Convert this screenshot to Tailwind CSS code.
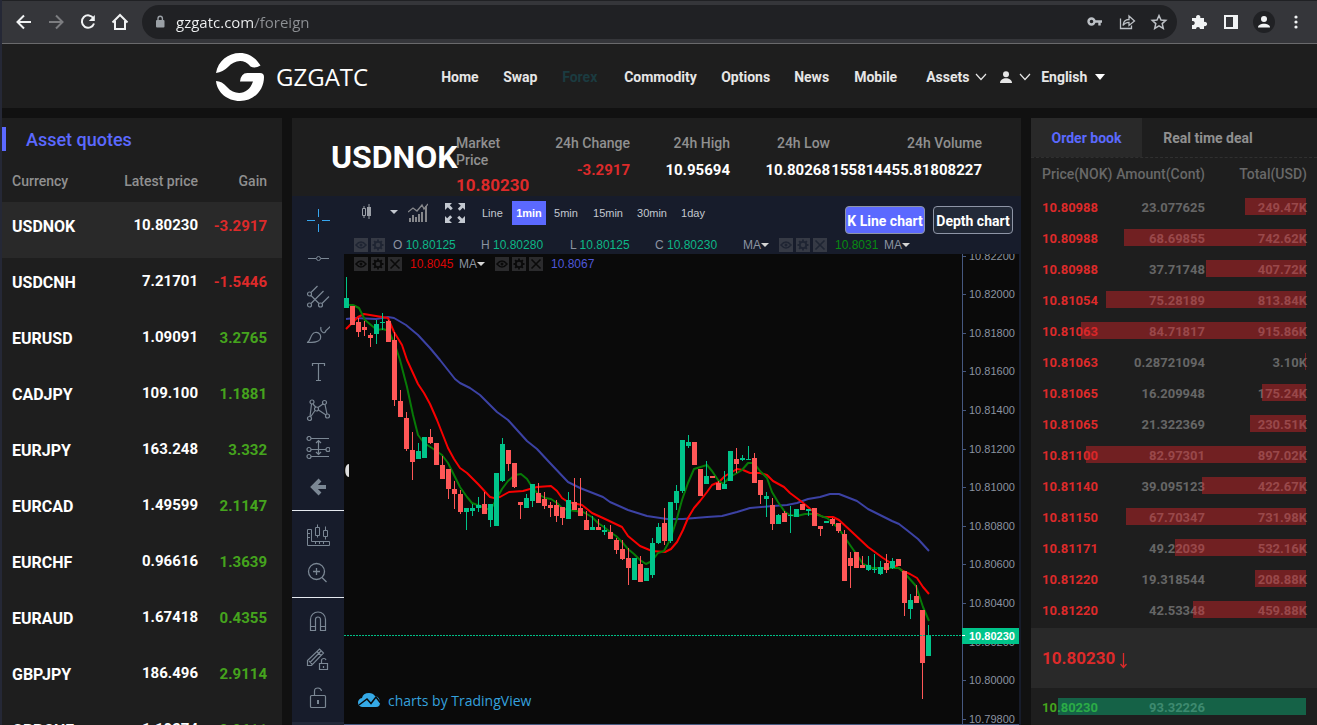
<!DOCTYPE html>
<html lang="en">
<head>
<meta charset="utf-8">
<title>GZGATC</title>
<script src="https://cdn.jsdelivr.net/npm/@tailwindcss/browser@4"></script>
</head>
<body class="bg-[#111] font-['Roboto',sans-serif] text-white">
<svg class="hidden">
  <symbol id="eye" viewBox="0 0 14 14"><path d="M2 7Q7 1 12 7Q7 13 2 7Z" fill="none" stroke="currentColor" stroke-width="1.5"/><circle cx="7" cy="7" r="1.5" fill="currentColor"/></symbol>
  <symbol id="gear" viewBox="0 0 14 14"><g fill="none" stroke="currentColor"><circle cx="7" cy="7" r="3.2" stroke-width="1.8"/><path d="M7 1.5v2M7 10.5v2M1.5 7h2M10.5 7h2M3.1 3.1l1.4 1.4M9.5 9.5l1.4 1.4M3.1 10.9l1.4-1.4M9.5 4.5l1.4-1.4" stroke-width="1.8"/></g></symbol>
  <symbol id="cross" viewBox="0 0 14 14"><path d="M2.5 2.5l9 9M11.5 2.5l-9 9" stroke="currentColor" stroke-width="1.6"/></symbol>
  <symbol id="chev" viewBox="0 0 12 8"><path d="M1 1l5 5.5L11 1" fill="none" stroke="currentColor" stroke-width="1.2"/></symbol>
</svg>
<div class="flex h-screen flex-col overflow-hidden border-l-2 border-[#252836]">
  <!-- browser bar -->
  <div class="flex h-11 shrink-0 items-center border-t border-b border-t-[#202124] border-b-[#6a6a6c] bg-[#35363a] pl-3">
    <div class="flex items-center gap-3 text-[#f1f3f4]">
      <button aria-label="Back"><svg class="size-5" viewBox="0 0 20 20" fill="none" stroke="currentColor" stroke-width="2"><path d="M17 10H4M10 3.5L3.5 10l6.5 6.5"/></svg></button>
      <button aria-label="Forward" class="text-[#7c7d80]"><svg class="size-5" viewBox="0 0 20 20" fill="none" stroke="currentColor" stroke-width="2"><path d="M3 10h13M10 3.5L16.5 10 10 16.5"/></svg></button>
      <button aria-label="Reload"><svg class="size-5" viewBox="0 0 20 20" fill="none" stroke="currentColor" stroke-width="2"><path d="M15.5 6.5A6.2 6.2 0 1 0 16 11.5"/><path d="M16.8 3v6h-6z" fill="currentColor" stroke="none"/></svg></button>
      <button aria-label="Home page"><svg class="size-5" viewBox="0 0 20 20" fill="none" stroke="currentColor" stroke-width="2"><path d="M2.5 10.5L10 3l7.500 7.5M5 9v8h10V9"/></svg></button>
    </div>
    <div class="ml-3 flex h-[34px] flex-1 items-center rounded-full bg-[#202124] pr-2 pl-3">
      <svg class="w-3" viewBox="0 0 12 14"><rect x="2" y="5" width="8.5" height="7.5" rx="1" fill="#9aa0a6"/><path d="M4 5V3.500a2.200 2.200 0 0 1 4.400 0V5" fill="none" stroke="#9aa0a6" stroke-width="1.4"/></svg>
      <input aria-label="Address" type="text" value="gzgatc.com/foreign" class="ml-2.5 min-w-0 flex-1 bg-[linear-gradient(90deg,#f1f3f4_79px,#8e9195_79px)] bg-clip-text font-['Open_Sans',sans-serif] text-[15px] leading-5 text-transparent">
      <div class="ml-auto flex items-center gap-3 text-[#bdc1c6]">
        <button aria-label="Password"><svg class="size-5" viewBox="0 0 20 20" fill="none" stroke="currentColor"><circle cx="6.5" cy="9.5" r="3" stroke-width="2.4"/><path d="M9.5 9.5h7.500M14.5 9.5v4" stroke-width="2.4"/></svg></button>
        <button aria-label="Share"><svg class="size-5" viewBox="0 0 20 20" fill="none" stroke="currentColor" stroke-width="1.3"><path d="M3.5 6.5v10h11v-3M6 13.5q.5-6 6-6V4l5.500 5-5.500 4.500v-3.200q-4 0-6 3.200z"/></svg></button>
        <button aria-label="Bookmark"><svg class="size-5" viewBox="0 0 20 20" fill="none" stroke="currentColor" stroke-width="1.5"><path d="M10 3.5l2 4.500 4.800.4-3.600 3.200 1.100 4.800L10 13.800l-4.300 2.600 1.100-4.800-3.600-3.200L8 8z"/></svg></button>
      </div>
    </div>
    <div class="flex items-center gap-3 pr-2.5 pl-3 text-[#f1f3f4]">
      <button aria-label="Extensions"><svg class="size-5" viewBox="0 0 20 20" fill="currentColor"><path d="M3 6h4.200a2.200 2.200 0 1 1 4 0H15v4a2.200 2.200 0 1 1 0 4v3h-4a2 2 0 1 0-4 0H3v-4a2.100 2.100 0 1 0 0-4z"/></svg></button>
      <button aria-label="Side panel"><svg class="size-5" viewBox="0 0 20 20"><path fill="currentColor" fill-rule="evenodd" d="M3 3h14v14H3zM5 5v10h7V5z"/></svg></button>
      <button aria-label="Profile" class="flex size-[22px] items-center justify-center rounded-full bg-[#202124]"><svg class="size-4" viewBox="0 0 16 16" fill="currentColor"><circle cx="8" cy="5" r="3"/><path d="M2 13.500c0-5 12-5 12 0z"/></svg></button>
      <button aria-label="Menu"><svg class="size-5" viewBox="0 0 20 20" fill="currentColor"><circle cx="9" cy="5" r="1.6"/><circle cx="9" cy="10" r="1.6"/><circle cx="9" cy="15" r="1.6"/></svg></button>
    </div>
  </div>
  <!-- site header -->
  <header class="flex h-16 shrink-0 items-center bg-[#1e1e1e] pt-0.5 pl-[214px]">
    <a href="#" class="flex items-center gap-3">
      <svg class="size-12" viewBox="0 0 48 48" fill="#fff"><path d="M0 20C2 8 12 0 24 0c9 0 16 5 20.500 12.500Q39 16 34.500 13.500C28 5 18 7 12 14q-5 5-12 6z"/><path d="M0 28q6 0 11 6c9 10 22 7 26-5.500H24q1-9 8-8.500h12q4 0 4 4C48 38 37 48 24 48 11 48 1 39 0 28z"/></svg>
      <span class="font-['Open_Sans',sans-serif] text-[24px]">GZGATC</span>
    </a>
    <nav class="ml-[73px] flex items-center text-[14px] font-bold text-[#e6e6e6]">
      <a href="#" class="w-[62px]">Home</a><a href="#" class="w-[59px]">Swap</a><a href="#" class="w-[62px] text-[#1b3b40]">Forex</a><a href="#" class="w-[97px]">Commodity</a><a href="#" class="w-[73px]">Options</a><a href="#" class="w-[60px]">News</a><a href="#" class="w-[72px]">Mobile</a>
      <button class="flex w-[74px] items-center font-bold"><span class="w-[49px] text-left">Assets</span><svg class="h-2 w-3"><use href="#chev"/></svg></button>
      <button aria-label="Account" class="flex w-[41px] items-center gap-[7px]"><svg class="h-3 w-3" viewBox="0 0 12 12" fill="currentColor"><circle cx="6" cy="3.2" r="3"/><path d="M0 12c0-6.500 12-6.500 12 0z"/></svg><svg class="h-2 w-3"><use href="#chev"/></svg></button>
      <button class="flex items-center gap-2 font-bold">English<svg class="h-1.5 w-2.5" viewBox="0 0 10 6"><path d="M0 0h10L5 6z" fill="#fff"/></svg></button>
    </nav>
  </header>

  <main class="grid min-h-0 flex-1 grid-cols-[280px_minmax(0,1fr)_286px] gap-2.5 pt-2.5">
    <!-- quotes -->
    <section class="overflow-hidden bg-[#1e1e1e] pt-[9px]">
      <h2 class="h-6 border-l-4 border-[#5b69ff] pl-5 text-[18px] leading-[26px] font-medium text-[#5b69ff]">Asset quotes</h2>
      <table class="mt-[9px] w-full table-fixed">
        <thead class="text-[14px] font-medium text-[#909090]"><tr class="h-[42px]"><th class="w-[110px] pl-2.5 text-left font-medium">Currency</th><th class="w-[86px] text-right font-medium">Latest price</th><th class="pr-[15px] text-right font-medium">Gain</th></tr></thead>
        <tbody id="quotes" class="text-[16px] font-bold"></tbody>
      </table>
    </section>

    <!-- chart -->
    <section class="flex min-h-0 flex-col overflow-hidden bg-[#171c2b]">
      <div class="flex h-[78px] shrink-0 bg-[#1e1e1e] pl-[39px] font-medium">
        <h1 class="w-[125px] self-center text-[32px] font-bold">USDNOK</h1>
        <dl class="flex pt-[17px] text-[14px] leading-[17px] whitespace-nowrap text-[#909090]">
          <div class="w-[74px] whitespace-normal"><dt class="w-14">Market Price</dt><dd class="pt-2 text-[17px] font-bold text-[#dd2a2a]">10.80230</dd></div>
          <div class="flex w-[100px] flex-col items-end gap-2.5"><dt>24h Change</dt><dd class="text-[15px] font-bold text-[#dd2a2a]">-3.2917</dd></div>
          <div class="flex w-[100px] flex-col items-end gap-2.5"><dt>24h High</dt><dd class="text-[15px] font-bold text-white">10.95694</dd></div>
          <div class="flex w-[100px] flex-col items-end gap-2.5"><dt>24h Low</dt><dd class="text-[15px] font-bold text-white">10.80268</dd></div>
          <div class="flex w-[152px] flex-col items-end gap-2.5"><dt>24h Volume</dt><dd class="text-[15px] font-bold text-white">155814455.81808227</dd></div>
        </dl>
      </div>
      <div class="flex min-h-0 flex-1 font-['Liberation_Sans',sans-serif]">
        <div class="w-[52px] shrink-0 text-[#7b8794]">
          <div class="border-b border-[#e6eaf0] py-[5px]">
            <button aria-label="Crosshair" class="flex h-[38px] w-full items-center justify-center text-[#37a6ef]"><svg class="size-6" viewBox="0 0 24 24" fill="none" stroke="currentColor"><path d="M12.500 1v8M12.500 16v8M1 12.500h8M16 12.500h8"/></svg></button>
            <button aria-label="Line" class="flex h-[38px] w-full items-center justify-center"><svg class="size-6" viewBox="0 0 24 24" fill="none" stroke="currentColor"><path d="M2 12.500h8M15 12.500h8"/><circle cx="12.5" cy="12.5" r="2"/></svg></button>
            <button aria-label="Pitchfork" class="flex h-[38px] w-full items-center justify-center"><svg class="size-6" viewBox="0 0 24 24" fill="none" stroke="currentColor" stroke-width="1.2"><circle cx="3.5" cy="10" r="2"/><circle cx="3.5" cy="21" r="2"/><circle cx="14.5" cy="21" r="2"/><path d="M5 8.500L11.500 2M5 19.500L17.500 7M16 19.500l7-7M5 11.500l8 8"/></svg></button>
            <button aria-label="Brush" class="flex h-[38px] w-full items-center justify-center"><svg class="size-6" viewBox="0 0 24 24" fill="none" stroke="currentColor" stroke-width="1.2"><path d="M1 20.500c4-1 3-9 8-10 4-1 7 3 5 7-2 3-7 3-13 3zM15 5q-1 4 2 5.500 2 1 3-2L25 4"/></svg></button>
            <button aria-label="Text" class="flex h-[38px] w-full items-center justify-center"><svg class="size-6" viewBox="0 0 24 24" fill="none" stroke="currentColor" stroke-width="1.2"><path d="M6.500 6V3.500h12V6M12.500 3.500v17M10 20.500h5"/></svg></button>
            <button aria-label="Pattern" class="flex h-[38px] w-full items-center justify-center"><svg class="size-6" viewBox="0 0 24 24" fill="none" stroke="currentColor" stroke-width="1.2"><circle cx="6" cy="4" r="2"/><circle cx="18.5" cy="4.5" r="2"/><circle cx="3.5" cy="20.5" r="2"/><circle cx="21.5" cy="18" r="2"/><circle cx="10.5" cy="11" r="2"/><path d="M5.500 6L4 18.500M7 6l3 3.500M9 12.500l-4.500 6.500M12 9.500L17 6M12.500 12l7.500 5M19 6.500l2 9.500"/></svg></button>
            <button aria-label="Position" class="flex h-[38px] w-full items-center justify-center"><svg class="size-6" viewBox="0 0 24 24" fill="none" stroke="currentColor" stroke-width="1.2"><circle cx="3" cy="2.5" r="2"/><circle cx="3" cy="13.5" r="2"/><circle cx="3" cy="20.5" r="2"/><circle cx="22" cy="13.5" r="2"/><path d="M5 2.500h18M5 13.500h15M5 20.500h18M12.500 5v13M10 7l2.500-2.500L15 7M10 16l2.500 2.500L15 16"/></svg></button>
            <button aria-label="Back arrow" class="flex h-[38px] w-full items-center justify-center"><svg class="size-6" viewBox="0 0 24 24" fill="none" stroke="currentColor"><path d="M20 13H7M14 6l-7 7 7 7" stroke-width="4"/></svg></button>
          </div>
          <div class="border-b border-[#e6eaf0] py-[5px]">
            <button aria-label="Measure" class="flex h-[38px] w-full items-center justify-center"><svg class="size-6" viewBox="0 0 24 24" fill="none" stroke="currentColor"><path d="M1.500 6.500h4v12h18v4h-22zM9.500 4.500h4v8h-4zM11.500 1.500v3M11.500 12.500v2M17.500 7.500h4v6h-4zM19.500 3.500v4M19.500 13.500v3M2 10.500h2M2 14.500h2M9.500 19v2M13.500 19v2M17.500 19v2"/></svg></button>
            <button aria-label="Zoom in" class="flex h-[38px] w-full items-center justify-center"><svg class="size-6" viewBox="0 0 24 24" fill="none" stroke="currentColor" stroke-width="1.3"><circle cx="10.5" cy="10.5" r="8"/><path d="M16 16.500l4.500 4.500M7 10.500h7M10.500 7v7"/></svg></button>
          </div>
          <div class="py-[5px]">
            <button aria-label="Magnet" class="flex h-[38px] w-full items-center justify-center"><svg class="size-6" viewBox="0 0 24 24" fill="none" stroke="currentColor" stroke-width="1.2"><path d="M4.500 20.500v-11a7.500 7.500 0 0 1 15 0v11h-5v-11a2.500 2.500 0 0 0-5 0v11zM4.500 16.500h5M14.500 16.500h5"/></svg></button>
            <button aria-label="Stay drawing" class="flex h-[38px] w-full items-center justify-center"><svg class="size-6" viewBox="0 0 24 24" fill="none" stroke="currentColor" stroke-width="1.2"><path d="M1.500 17.500v-5L13.500 1l4 4-12 12.500zM3 13l3 3M4 14.500L15 3M11 3.500l4 4M13.500 15.500h8v6h-8zM15.500 15v-2.500q0-2 2.500-2 1.500 0 2 1.500M17.500 18v2"/></svg></button>
            <button aria-label="Lock" class="flex h-[38px] w-full items-center justify-center"><svg class="size-6" viewBox="0 0 24 24" fill="none" stroke="currentColor" stroke-width="1.2"><rect x="4.5" y="9.5" width="15" height="12" rx="1"/><path d="M8.500 9V5q0-3 3.500-3 3 0 3.500 3"/><path d="M12 14v4" stroke-width="2"/></svg></button>
          </div>
          <div class="h-3 bg-[#222838]"></div>
        </div>
        <div class="min-w-0 flex-1 pr-0.5">
          <div class="flex h-10 items-start pl-4 text-[11px] text-[#c3c8d0]">
            <button aria-label="Chart type" class="mt-[7px] flex items-center gap-[17px]"><svg class="h-[18px] w-[13px]" viewBox="0 0 13 18"><path d="M2.500 5.500h3v7h-3zM4 3v2.500M4 12.500V15" fill="none" stroke="#9a9ea6"/><path d="M7 4h4v9H7zM8.500 1h1v15h-1z" fill="#9a9ea6"/></svg><svg class="h-1 w-2" viewBox="0 0 8 4"><path d="M0 0h8L4 4z" fill="#c3c8d0"/></svg></button>
            <button aria-label="Indicators" class="mt-[7px] ml-2.5"><svg class="h-5 w-5" viewBox="0 0 20 20"><path d="M1 15h2v4H1zM4 12h2v7H4zM7 14h2v5H7zM10 11h2v8h-2zM13 9h2v10h-2zM17 3h2v16h-2z" fill="#85868a"/><path d="M0 9l5-4 4 3 5-6 2 4 4-5" fill="none" stroke="#85868a" stroke-width="1.3"/></svg></button>
            <button aria-label="Full screen" class="mt-[7px] ml-[17px]"><svg class="size-5" viewBox="0 0 20 20" fill="#c3c8d0"><path d="M0 0h7L4.800 2.200l3 3-2 2-3-3L0 7zM20 0v7l-2.200-2.200-3 3-2-2 3-3L13 0zM0 20v-7l2.200 2.200 3-3 2 2-3 3L7 20zM20 20h-7l2.200-2.200-3-3 2-2 3 3L20 13z"/></svg></button>
            <div class="mt-[5px] ml-2 flex h-6 items-stretch">
              <button class="w-[39px] pl-[9px] text-left">Line</button><button class="w-[34px] bg-[#5b69ff] font-bold text-white">1min</button><button class="w-[40px]">5min</button><button class="w-[44px]">15min</button><button class="w-[44px]">30min</button><button class="w-[38px]">1day</button>
            </div>
            <div class="mt-2.5 mr-1.5 ml-auto flex gap-2 font-['Roboto',sans-serif] text-[14px] font-bold whitespace-nowrap text-white">
              <button class="flex h-7 w-20 items-center justify-center rounded border border-[#8e95a6] bg-[#5b69ff] pt-0.5">K Line chart</button>
              <button class="flex h-7 w-20 items-center justify-center rounded border border-[#8e95a6] bg-[#232a38] pt-0.5">Depth chart</button>
            </div>
          </div>
          <div class="flex h-[18px] items-center pl-2.5 text-[12px] text-[#8b93a1]">
            <div class="flex gap-[3px] text-[#1f2533] *:size-[14px] *:bg-[#363a45]"><svg><use href="#eye"/></svg><svg><use href="#gear"/></svg></div>
            <span class="ml-2 w-[88px]">O <span class="text-[#0db787]">10.80125</span></span>
            <span class="w-[89px]">H <span class="text-[#0db787]">10.80280</span></span>
            <span class="w-[85px]">L <span class="text-[#0db787]">10.80125</span></span>
            <span class="w-[88px]">C <span class="text-[#0db787]">10.80230</span></span>
            <span class="flex w-9 items-center">MA<svg class="h-1 w-2" viewBox="0 0 8 4"><path d="M0 0h8L4 4z" fill="#d5d5d5"/></svg></span>
            <div class="flex gap-[3px] text-[#1f2533] *:size-[14px] *:bg-[#363a45]"><svg><use href="#eye"/></svg><svg><use href="#gear"/></svg><svg><use href="#cross"/></svg></div>
            <span class="ml-2 w-[49px] text-[#078a12]">10.8031</span>
            <span class="flex items-center">MA<svg class="h-1 w-2" viewBox="0 0 8 4"><path d="M0 0h8L4 4z" fill="#d5d5d5"/></svg></span>
          </div>
          <div class="relative bg-[#0a0a0a]">
            <svg id="chart" class="block w-full" viewBox="344 254 675 471" font-family="Liberation Sans, sans-serif" font-size="11">
              <g fill="none" stroke-width="2" stroke-linejoin="round">
                <path stroke="#3c42a4" d="M346 319L355 318 376 319 388 317 394 318 406 325 418 335 430 348 440 360 455 379 460 383 470 388 480 395 497 412 508 420 527 441 537 449 550 463 568 482 580 488 603 497 610 502 628 510 647 516 667 519 683 519 707 517 722 516 737 512 750 508 773 506 787 505 797 503 808 499 820 497 830 494 839 494 857 501 868 509 892 521 899 524 908 531 918 539 929 551"/>
                <path stroke="#f80000" d="M346 329L352 323 358 317 364 314 376 316 388 318 394 332 402 345 407 360 418 384 424 393 430 404 437 420 448 448 454 459 460 468 467 473 478 484 490 497 494 498 500 497 509 492 523 491 537 487 551 486 557 491 562 498 568 502 582 505 592 513 603 518 622 527 628 536 634 541 640 546 652 551 665 552 671 549 677 542 683 530 688 518 694 508 700 501 707 492 712 485 719 482 725 476 732 472 737 469 743 470 750 473 760 473 767 475 773 481 784 487 790 493 802 502 814 512 823 517 833 517 839 520 852 532 868 547 883 558 897 567 903 571 910 574 917 578 923 587 929 594"/>
                <path stroke="#077a07" d="M346 305L353 305 359 308 365 320 371 325 377 330 383 329 389 331 396 348 400 360 407 387 413 415 418 435 424 443 432 448 442 455 448 463 453 473 460 487 467 497 472 503 480 506 487 509 491 509 496 500 502 489 508 481 515 475 521 474 527 479 532 487 538 494 545 498 551 499 557 503 562 508 568 510 583 512 592 517 598 523 604 527 610 532 616 536 622 542 628 549 634 554 640 560 646 564 652 561 658 553 664 551 670 540 676 522 682 500 688 483 694 469 707 465 712 471 718 480 723 484 730 477 737 473 742 470 748 463 754 463 760 471 767 478 772 492 778 502 785 512 790 515 797 516 805 514 815 514 827 518 833 523 839 529 850 545 857 555 863 564 872 568 887 568 899 568 908 577 916 586 923 607 929 621"/>
              </g>
              <g id="candles" shape-rendering="crispEdges"></g>
              <path d="M344 635.500H962" stroke="#00c087" stroke-dasharray="2 1"/>
              <path d="M962.500 254V724M344 724.500H1019" stroke="#46587f"/>
              <g id="axis" fill="#8b93a1"></g>
              <rect x="962" y="628" width="57" height="16" fill="#00c48a"/>
              <path d="M962 635.500h3" stroke="#fff"/>
              <text x="969" y="640" fill="#fff" font-weight="bold">10.80230</text>
              <path d="M349 464C344 464 344 477 349 477z" fill="#ddd"/>
              <path d="M363 707a4.500 4.500 0 0 1-1-9q1-5 7-5 4 0 6 3 5 1 5 7 0 4-4 4zM359 706l8-7 4 4 5-6 5 7" fill="#35a9e6"/>
              <path d="M359 705l8-6 4 4.500 5-6.500 6 8" fill="none" stroke="#0a0a0a" stroke-width="1.5"/>
              <text x="388" y="706" fill="#35a1dd" font-family="Open Sans, sans-serif" font-size="14">charts by TradingView</text>
            </svg>
            <div class="absolute top-0.5 left-2.5 flex h-4 items-center text-[12px] text-[#8b93a1]">
              <div class="flex gap-[3px] text-[#0a0a0a] *:size-[14px] *:bg-[#2b2b2d]"><svg><use href="#eye"/></svg><svg><use href="#gear"/></svg><svg><use href="#cross"/></svg></div>
              <span class="ml-2 w-[49px] text-[#dc0505]">10.8045</span>
              <span class="flex w-9 items-center">MA<svg class="h-1 w-2" viewBox="0 0 8 4"><path d="M0 0h8L4 4z" fill="#d5d5d5"/></svg></span>
              <div class="flex gap-[3px] text-[#0a0a0a] *:size-[14px] *:bg-[#2b2b2d]"><svg><use href="#eye"/></svg><svg><use href="#gear"/></svg><svg><use href="#cross"/></svg></div>
              <span class="ml-2 text-[#4e57d8]">10.8067</span>
            </div>
          </div>
        </div>
      </div>
    </section>

    <!-- order book -->
    <section class="overflow-hidden bg-[#1e1e1e] font-medium">
      <div class="flex h-10 border-b border-dashed border-[#303030] text-[14px]">
        <button class="w-[111px] bg-[#292929] pt-0.5 font-bold text-[#5b69ff]">Order book</button>
        <button class="w-[132px] pt-0.5 font-bold text-[#909090]">Real time deal</button>
      </div>
      <div class="grid h-[33px] grid-cols-[70px_93px_102px] items-center pl-[11px] text-[14px] text-[#686868]"><span>Price(NOK)</span><span class="text-right">Amount(Cont)</span><span class="text-right">Total(USD)</span></div>
      <div id="asks"></div>
      <div class="mt-[3px] flex h-[60px] items-center gap-1 bg-[#292929] pt-0.5 pl-[11px] text-[17px] font-bold text-[#dd2a2a]">10.80230<svg class="mt-1 h-4 w-[9px]" viewBox="0 0 9 16"><path d="M4.500 0v14M1.500 11l3 3.500 3-3.500" fill="none" stroke="currentColor" stroke-width="1.3"/></svg></div>
      <div id="bids" class="pt-[3px]"></div>
    </section>
  </main>
</div>
<script>
const quotes = [["USDNOK","10.80230","-3.2917"],["USDCNH","7.21701","-1.5446"],["EURUSD","1.09091","3.2765"],["CADJPY","109.100","1.1881"],["EURJPY","163.248","3.332"],["EURCAD","1.49599","2.1147"],["EURCHF","0.96616","1.3639"],["EURAUD","1.67418","0.4355"],["GBPJPY","186.496","2.9114"],["GBPCHF","1.10374","0.9611"]];
document.getElementById("quotes").innerHTML = quotes.map(([s,p,g],i) => `<tr class="h-14 align-top ${i ? "" : "bg-[#292929]"}"><td class="pt-[13px] pl-2.5">${s}</td><td class="pt-3 text-right text-[15px]">${p}</td><td class="pt-[13px] pr-[15px] text-right text-[15px] ${g[0]=="-" ? "text-[#dd2a2a]" : "text-[#45a41d]"}">${g}</td></tr>`).join("");

const row = (p,a,t,w,price,bar) => `<div class="relative grid h-[31px] grid-cols-[70px_93px_102px] items-center pt-0.5 pl-[11px] text-[13px] font-bold text-[#666]"><span class="${price}">${p}</span><span class="text-right">${a}</span><span class="text-right">${t}</span><i class="absolute top-[7px] right-[11px] h-[17px] ${bar}" style="width:${w}px"></i></div>`;
const asks = [["10.80988","23.077625","249.47K",61],["10.80988","68.69855","742.62K",182],["10.80988","37.71748","407.72K",100],["10.81054","75.28189","813.84K",200],["10.81063","84.71817","915.86K",225],["10.81063","0.28721094","3.10K",1],["10.81065","16.209948","175.24K",44],["10.81065","21.322369","230.51K",56],["10.81100","82.97301","897.02K",220],["10.81140","39.095123","422.67K",104],["10.81150","67.70347","731.98K",180],["10.81171","49.22039","532.16K",131],["10.81220","19.318544","208.88K",51],["10.81220","42.53348","459.88K",113]];
document.getElementById("asks").innerHTML = asks.map(r => row(...r,"text-[#dd2a2a]","bg-[#d62329]/45")).join("");
document.getElementById("bids").innerHTML = row("10.80230","93.32226","",248,"text-[#45a41d]","bg-[#0cb57b]/45");

// high, body top, body bottom, low, rising
const c = [[277,298,308,308,1],[306,306,325,325,0],[318,322,332,337,0],[321,327,330,336,0],[333,335,338,347,0],[320,324,334,344,1],[313,322,323,330,1],[320,321,342,342,0],[332,340,400,406,0],[390,401,417,417,0],[412,418,449,451,0],[432,450,462,480,0],[443,451,459,459,1],[437,437,458,458,1],[429,437,443,444,0],[443,443,465,465,0],[456,465,479,479,0],[469,469,489,499,0],[481,489,494,509,0],[490,494,512,514,0],[508,508,512,530,1],[504,508,511,516,1],[497,505,508,512,1],[492,504,514,514,0],[504,504,520,527,1],[473,473,526,526,1],[438,444,481,482,1],[450,450,464,471,0],[463,463,487,488,0],[502,502,505,519,0],[494,498,508,508,1],[484,484,501,507,1],[483,493,503,503,0],[492,499,506,509,0],[502,505,508,517,0],[500,505,516,522,0],[507,507,518,525,0],[492,500,519,519,1],[478,502,510,510,0],[478,508,516,516,0],[511,520,530,530,0],[516,527,530,530,1],[519,527,530,530,0],[525,530,532,535,1],[525,532,539,539,0],[538,540,550,554,0],[540,549,559,560,0],[548,558,568,585,0],[558,558,580,580,1],[556,564,582,582,0],[568,568,581,581,1],[538,543,575,578,1],[523,527,543,544,1],[508,523,541,545,0],[502,502,541,543,1],[485,491,503,510,1],[440,440,491,493,1],[435,442,446,448,1],[442,442,465,465,0],[469,469,496,496,0],[461,476,484,484,1],[476,476,478,478,0],[481,483,490,490,0],[471,484,489,489,1],[451,451,481,481,1],[448,459,464,473,0],[455,458,460,461,1],[446,459,460,460,1],[453,458,483,483,0],[480,480,495,504,0],[492,496,499,517,1],[498,505,524,530,0],[514,515,524,524,1],[511,513,522,522,0],[506,515,516,533,1],[509,509,517,517,1],[504,504,510,510,0],[509,509,511,516,1],[508,508,526,526,0],[526,526,529,536,0],[521,521,523,523,1],[518,519,524,526,0],[523,523,531,533,0],[530,534,581,581,0],[552,558,566,588,0],[552,552,568,568,0],[556,565,568,568,0],[556,565,570,571,1],[554,569,570,573,1],[561,567,574,575,1],[554,563,570,573,0],[558,561,568,569,1],[559,559,566,566,0],[571,571,603,616,0],[594,600,609,619,1],[585,596,603,603,0],[610,610,663,699,0],[625,635,656,656,1]];
document.getElementById("candles").innerHTML = c.map(([h,t,b,l,up],i) => `<path fill="${up ? "#00c48a" : "#ff5757"}" d="M${344+6*i} ${t}h5V${b}h-5zM${346+6*i} ${h}h1V${l}h-1z"/>`).join("");
document.getElementById("axis").innerHTML = [...Array(13).keys()].map(k => { const y = Math.round(255.5 + 38.6*k); return `<path d="M963 ${y}h3v1h-3z" fill="#46587f"/><text x="969" y="${y+4}">${(10.822-0.002*k).toFixed(5)}</text>`; }).join("");
</script>
</body>
</html>
